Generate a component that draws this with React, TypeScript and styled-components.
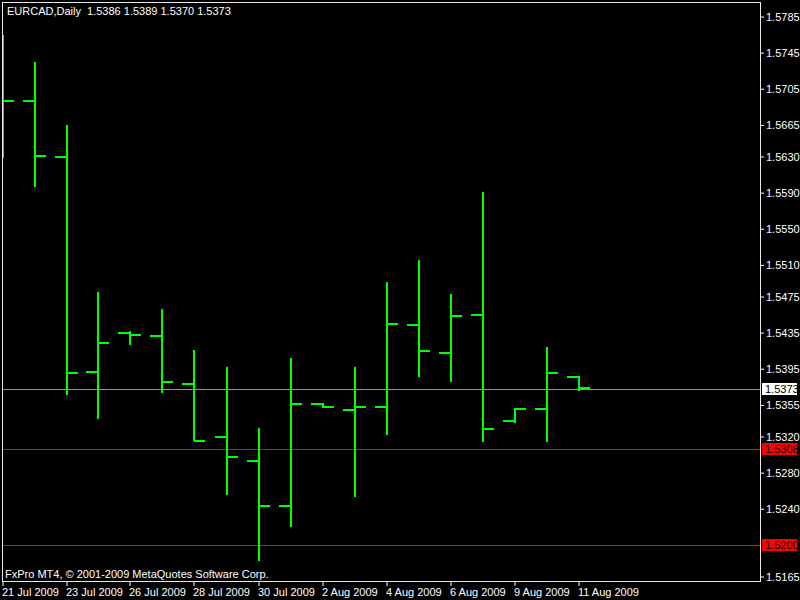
import React from "react";
import styled, { createGlobalStyle } from "styled-components";

const Global = createGlobalStyle`
  html, body { margin: 0; padding: 0; background: #000; }
  body { font-family: "Liberation Sans", Arial, sans-serif; }
`;

const Page = styled.div`
  width: 800px; height: 600px; background: #000; overflow: hidden;
  display: flex; flex-direction: column;
`;
const ChartRow = styled.div`
  display: flex; padding: 2px 0 0 2px; height: 580px;
`;
const Plot = styled.div`
  position: relative; width: 757px; height: 578px;
  border: 1px solid #e8e8e8;
`;
const Header = styled.div`
  position: absolute; left: 4px; top: 2px; color: #fff; font-size: 11px;
  white-space: pre;
`;
const Copyright = styled.div`
  position: absolute; left: 2px; bottom: 1px; color: #fff; font-size: 11px;
`;
const Svg = styled.svg`display: block;`;

const Y = (p: number) => 17 + (1.5785 - p) * 9032;
const bars = [
  [3, 35, 158, 101, 101], [35, 62, 187, 101, 156], [67, 125, 395, 157, 373],
  [98, 292, 419, 372, 343], [130, 331, 345, 333, 335], [162, 309, 393, 336, 382],
  [194, 350, 441, 384, 441], [227, 367, 495, 437, 457], [259, 428, 561, 461, 506],
  [291, 358, 527, 506, 404], [323, 403, 408, 404, 407], [355, 367, 497, 410, 407],
  [387, 282, 435, 407, 324], [419, 260, 377, 325, 351], [451, 294, 382, 353, 316],
  [483, 192, 442, 315, 429], [515, 408, 423, 421, 409], [547, 347, 442, 409, 373],
  [579, 376, 391, 377, 388],
];
const prices = ["1.5785","1.5745","1.5705","1.5665","1.5630","1.5590","1.5550","1.5510","1.5475","1.5435","1.5395","1.5355","1.5320","1.5280","1.5240","1.5165"];
const dates: [number, string][] = [[3,"21 Jul 2009"],[67,"23 Jul 2009"],[130,"26 Jul 2009"],[194,"28 Jul 2009"],[259,"30 Jul 2009"],[323,"2 Aug 2009"],[387,"4 Aug 2009"],[451,"6 Aug 2009"],[515,"9 Aug 2009"],[579,"11 Aug 2009"]];
const tags: [number, string, string][] = [[389, "1.5373", "#fff"], [449, "1.5308", "#f00"], [545, "1.5200", "#f00"]];

export default function App() {
  return (
    <Page>
      <Global />
      <ChartRow>
        <Plot>
          <Svg width={757} height={578} viewBox="3 3 757 578">
            <line x1={3} x2={760} y1={389.5} y2={389.5} stroke="#8a96a0" strokeWidth={1} />
            <line x1={3} x2={760} y1={449.5} y2={449.5} stroke="#f00" strokeWidth={1} />
            <line x1={3} x2={760} y1={545.5} y2={545.5} stroke="#f00" strokeWidth={1} />
            {bars.map(([x, h, l, o, c], i) => (
              <g key={i} stroke="#00ff00" strokeWidth={2}>
                <line x1={x} x2={x} y1={h} y2={l} />
                <line x1={x - 12} x2={x} y1={o} y2={o} />
                <line x1={x} x2={x + 11} y1={c} y2={c} />
              </g>
            ))}
          </Svg>
          <Header>EURCAD,Daily  1.5386 1.5389 1.5370 1.5373</Header>
          <Copyright>FxPro MT4, © 2001-2009 MetaQuotes Software Corp.</Copyright>
        </Plot>
        <Svg width={39} height={580} viewBox="761 2 39 580">
          {prices.map((p) => {
            const y = Y(parseFloat(p));
            return (
              <g key={p}>
                <line x1={761} x2={764} y1={y} y2={y} stroke="#fff" />
                <text x={766} y={y + 4} fill="#fff" fontSize={11} fontFamily="Liberation Sans, Arial, sans-serif">{p}</text>
              </g>
            );
          })}
          {tags.map(([y, t, c]) => (
            <g key={t}>
              <rect x={762} y={y - 6} width={35} height={12} fill={c} />
              <text x={765} y={y + 4} fill="#000" fontSize={11} fontFamily="Liberation Sans, Arial, sans-serif">{t}</text>
            </g>
          ))}
        </Svg>
      </ChartRow>
      <Svg width={800} height={18} viewBox="0 582 800 18">
        {dates.map(([x, t]) => (
          <g key={t}>
            <line x1={x} x2={x} y1={582} y2={586} stroke="#fff" />
            <text x={x - 1} y={596} fill="#fff" fontSize={11} fontFamily="Liberation Sans, Arial, sans-serif">{t}</text>
          </g>
        ))}
      </Svg>
    </Page>
  );
}
